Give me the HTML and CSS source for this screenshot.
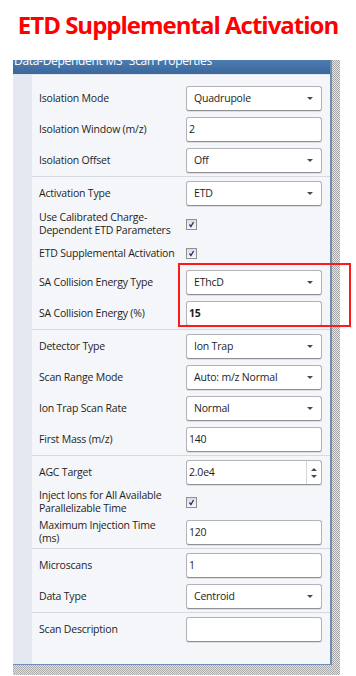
FILE: index.html
```html
<!DOCTYPE html>
<html lang="en">
<head>
    <meta charset="UTF-8" />
    <meta name="viewport" content="width=device-width, initial-scale=1.0"/>
    <title>ETD Supplemental Activation</title>
    <link rel="stylesheet" href="styles.css">
</head>
<body>
    <h1 class="title">ETD Supplemental Activation</h1>

    <div class="frame">
        <div class="panel">
            <div class="panel-head"><span>Data-Dependent MS² Scan Properties</span></div>
            <div class="panel-body">
                <div class="group">
                    <div class="row"><div class="label">Isolation Mode</div><div class="field select">Quadrupole</div></div>
                    <div class="row"><div class="label">Isolation Window (m/z)</div><div class="field text">2</div></div>
                    <div class="row"><div class="label">Isolation Offset</div><div class="field select">Off</div></div>
                </div>

                <div class="group">
                    <div class="row"><div class="label">Activation Type</div><div class="field select">ETD</div></div>
                    <div class="row check loose"><div class="label">Use Calibrated Charge-<br>Dependent ETD Parameters</div><div class="check-cell"><span class="checkbox"><svg viewBox="0 0 11 11"><polyline points="3,5.5 4.8,8 8,2.5" /></svg></span></div></div>
                    <div class="row check"><div class="label">ETD Supplemental Activation</div><div class="check-cell"><span class="checkbox"><svg viewBox="0 0 11 11"><polyline points="3,5.5 4.8,8 8,2.5" /></svg></span></div></div>
                    <div class="row"><div class="label">SA Collision Energy Type</div><div class="field select">EThcD</div></div>
                    <div class="row"><div class="label">SA Collision Energy (%)</div><div class="field text bold">15</div></div>
                </div>

                <div class="group">
                    <div class="row"><div class="label">Detector Type</div><div class="field select">Ion Trap</div></div>
                    <div class="row"><div class="label">Scan Range Mode</div><div class="field select">Auto: m/z Normal</div></div>
                    <div class="row"><div class="label">Ion Trap Scan Rate</div><div class="field select">Normal</div></div>
                    <div class="row"><div class="label">First Mass (m/z)</div><div class="field text">140</div></div>
                </div>

                <div class="group">
                    <div class="row"><div class="label">AGC Target</div><div class="field text spin">2.0e4<span class="spinner"><i class="up"></i><i class="down"></i></span></div></div>
                    <div class="row check"><div class="label">Inject Ions for All Available<br>Parallelizable Time</div><div class="check-cell"><span class="checkbox"><svg viewBox="0 0 11 11"><polyline points="3,5.5 4.8,8 8,2.5" /></svg></span></div></div>
                    <div class="row"><div class="label">Maximum Injection Time<br>(ms)</div><div class="field text">120</div></div>
                </div>

                <div class="group">
                    <div class="row"><div class="label">Microscans</div><div class="field text">1</div></div>
                    <div class="row"><div class="label">Data Type</div><div class="field select">Centroid</div></div>
                </div>

                <div class="group">
                    <div class="row"><div class="label">Scan Description</div><div class="field text"></div></div>
                </div>
            </div>
        </div>
        <div class="highlight"></div>
    </div>
</body>
</html>
```

FILE: styles.css
```css
body {
    margin: 0;
    padding: 0;
    background: #ffffff;
    font-family: "Open Sans", "Noto Sans", sans-serif;
}

.title {
    margin: 0 0 20px 0;
    padding-top: 10px;
    height: 30px;
    line-height: 30px;
    text-align: center;
    color: #ff0000;
    font-size: 24px;
    font-weight: bold;
    letter-spacing: -1px;
    white-space: nowrap;
}

/* panel + its hatched drop shadow */
.frame {
    position: relative;
    margin-left: 13px;
    width: 319px;
    padding: 0 8px 10px 0;
    background-color: #c4c4c4;
    background-image: repeating-conic-gradient(#a9a9a9 0 25%, #e2e2e2 0 50%);
    background-size: 2px 2px;
}

.panel {
    background: #f5f6f9;
    border-right: 2px solid #6f8db5;
    border-bottom: 1px solid #6f8db5;
}

.panel-head {
    height: 14px;
    overflow: hidden;
    background: linear-gradient(#4d7cb1, #3b679b);
    border-bottom: 1px solid #dfe5ee;
    color: #ffffff;
    font-size: 12px;
    line-height: 16px;
    letter-spacing: -0.3px;
    white-space: nowrap;
}

.panel-head span {
    display: block;
    margin-top: -7px;
    padding-left: 1px;
}

.panel-body {
    padding: 7px 0 19px 19px;
    background: linear-gradient(to right, #e4e8f0 19px, #f5f6f9 19px);
}

.group {
    padding-top: 1px;
}

.group + .group {
    border-top: 1px solid #d6d9e0;
}

.row {
    display: grid;
    grid-template-columns: 1fr 136px;
    align-items: center;
    padding: 3px 8px 3px 7px;
    font-size: 10.5px;
    letter-spacing: -0.2px;
    color: #1e1e1e;
}

.row.check {
    padding-top: 1px;
    padding-bottom: 1px;
}

.row.check.loose {
    padding-top: 2px;
    padding-bottom: 3px;
}

.label {
    line-height: 13px;
    white-space: nowrap;
}

.field {
    position: relative;
    height: 23px;
    line-height: 23px;
    background: #ffffff;
    border: 1px solid #b1b3b8;
    border-bottom-color: #8f9196;
    border-radius: 3px;
    box-shadow: 0 1px 0 #dcdde0;
    white-space: nowrap;
}

.field.select {
    padding-left: 7px;
}

.field.text {
    padding-left: 2px;
}

.field.bold {
    font-weight: bold;
}

.field.select::after {
    content: "";
    position: absolute;
    right: 8px;
    top: 10px;
    border-left: 3px solid transparent;
    border-right: 3px solid transparent;
    border-top: 3px solid #4a4a4a;
}

.spinner {
    position: absolute;
    top: 0;
    right: 0;
    width: 14px;
    height: 23px;
    border-left: 1px solid #d6d7da;
}

.spinner i {
    position: absolute;
    left: 4px;
    border-left: 3px solid transparent;
    border-right: 3px solid transparent;
}

.spinner .up {
    top: 7px;
    border-bottom: 3px solid #4a4a4a;
}

.spinner .down {
    top: 14px;
    border-top: 3px solid #4a4a4a;
}

.check-cell {
    height: 25px;
    display: flex;
    align-items: center;
}

.checkbox {
    display: block;
    width: 11px;
    height: 11px;
    box-sizing: border-box;
    border: 1px solid #8e8f8f;
    background: linear-gradient(#dcdde0, #f7f7f8);
}

.checkbox svg {
    display: block;
    width: 9px;
    height: 9px;
}

.checkbox polyline {
    fill: none;
    stroke: #1f2e75;
    stroke-width: 1.6;
}

.highlight {
    position: absolute;
    left: 165px;
    top: 203px;
    width: 169px;
    height: 60px;
    border: 2px solid #ff1a1a;
}
```
